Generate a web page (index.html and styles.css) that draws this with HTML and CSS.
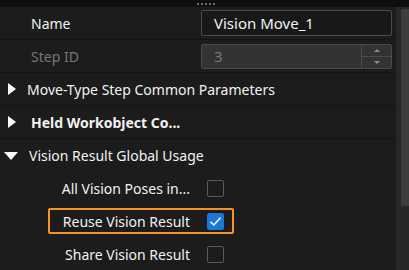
FILE: index.html
```html
<!DOCTYPE html>
<html lang="en">

<head>
    <meta charset="UTF-8">
    <title>Step Parameters</title>
    <link rel="stylesheet" href="styles.css">
</head>

<body>
    <div class="handle"><span class="grip"></span></div>

    <div class="panel">
        <div class="list">
            <div class="row field">
                <span class="label">Name</span>
                <div class="input">Vision Move_1</div>
            </div>
            <div class="row field">
                <span class="label disabled">Step ID</span>
                <div class="input spin">
                    <span class="value">3</span>
                    <span class="arrows">
                        <span class="arrow up"></span>
                        <span class="arrow down"></span>
                    </span>
                </div>
            </div>
            <div class="row group">
                <span class="tri right"></span>
                <span class="title">Move-Type Step Common Parameters</span>
            </div>
            <div class="row group">
                <span class="tri right"></span>
                <span class="title bold">Held Workobject Co...</span>
            </div>
            <div class="row group open">
                <span class="tri down"></span>
                <span class="title">Vision Result Global Usage</span>
            </div>
            <div class="row check">
                <span class="check-label">All Vision Poses in...</span>
                <span class="box"></span>
            </div>
            <div class="row check marked">
                <span class="check-label">Reuse Vision Result</span>
                <span class="box on">
                    <svg width="13" height="11" viewBox="0 0 13 11">
                        <path d="M1.5 5.8 L4.8 9 L11.5 1.8" fill="none" stroke="#fff" stroke-width="1.5" />
                    </svg>
                </span>
            </div>
            <div class="row check last">
                <span class="check-label">Share Vision Result</span>
                <span class="box"></span>
            </div>
        </div>
        <div class="scrollbar">
            <div class="thumb"></div>
        </div>
    </div>
</body>

</html>
```

FILE: styles.css
```css
body {
    margin: 0;
    background: #1c1c1c;
    font-family: 'Noto Sans', sans-serif;
    font-size: 14px;
    color: #f2f2f2;
    overflow: hidden;
}

.handle {
    height: 7px;
    background: #0e0e0e;
    display: flex;
    justify-content: center;
}

.grip {
    width: 20px;
    height: 2px;
    margin-top: 3px;
    margin-left: 5px;
    background: repeating-linear-gradient(90deg, #6a6a6a 0 2px, transparent 2px 4px);
}

.panel {
    display: flex;
    height: 263px;
}

.list {
    flex: 1;
}

.scrollbar {
    width: 13px;
    background: #272727;
    display: flex;
    justify-content: flex-end;
}

.thumb {
    width: 8px;
    height: 197px;
    margin-top: 2px;
    background: #3d3d3d;
    border-radius: 2px 0 0 2px;
}

.row {
    height: 32px;
    display: flex;
    align-items: center;
    border-bottom: 1px solid #141414;
}

.field .label {
    width: 170px;
    padding-left: 31px;
}

.label.disabled {
    color: #767676;
}

.input {
    width: 177px;
    height: 24px;
    margin-left: 0;
    padding-left: 12px;
    border: 1px solid #4b4b4b;
    border-radius: 2px;
    background: #181818;
    display: flex;
    align-items: center;
    color: #f2f2f2;
    font-size: 15px;
}

.input.spin {
    height: 23px;
    background: #333333;
    color: #777777;
    padding-left: 12px;
}

.spin .value {
    flex: 1;
}

.arrows {
    width: 29px;
    height: 100%;
    border-left: 1px solid #4b4b4b;
    display: flex;
    flex-direction: column;
}

.arrow {
    flex: 1;
    display: flex;
    align-items: center;
    justify-content: center;
}

.arrow.up {
    border-bottom: 1px solid #4b4b4b;
}

.arrow::before {
    content: "";
    border-left: 3px solid transparent;
    border-right: 3px solid transparent;
}

.arrow.up::before {
    border-bottom: 3px solid #8a8a8a;
}

.arrow.down::before {
    border-top: 3px solid #8a8a8a;
}

.group .title {
    margin-left: 11px;
}

.group .title.bold {
    font-weight: bold;
    margin-left: 15px;
}

.tri {
    width: 0;
    height: 0;
}

.tri.right {
    margin-left: 8px;
    border-top: 6px solid transparent;
    border-bottom: 6px solid transparent;
    border-left: 8px solid #ffffff;
}

.tri.down {
    margin-left: 4px;
    border-left: 7px solid transparent;
    border-right: 7px solid transparent;
    border-top: 8px solid #ffffff;
}

.row.open,
.row.check {
    border-bottom: none;
    height: 33px;
}

.row.check.last {
    border-bottom: 1px solid #141414;
}

.check {
    position: relative;
}

.check-label {
    width: 190px;
    text-align: right;
}

.box {
    width: 15px;
    height: 15px;
    margin-left: 17px;
    border: 1px solid #5a5a5a;
    border-radius: 2px;
    display: flex;
    align-items: center;
    justify-content: center;
}

.box.on {
    background: #1b78d6;
    border-color: #1b78d6;
}

.marked::after {
    content: "";
    position: absolute;
    left: 48px;
    top: 3px;
    width: 182px;
    height: 22px;
    border: 2px solid #f7931e;
    border-radius: 2px;
}
```
